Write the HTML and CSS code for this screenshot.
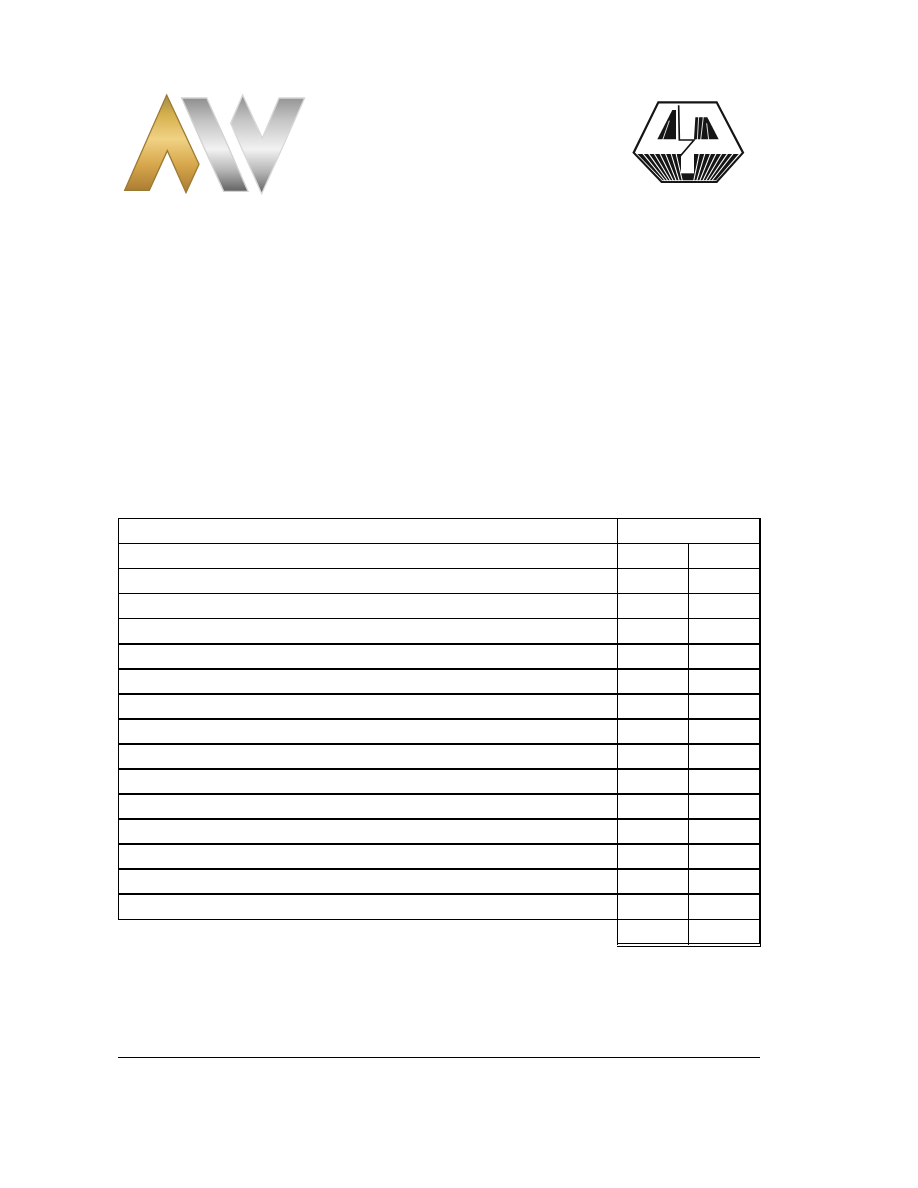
FILE: index.html
```html
<!DOCTYPE html>
<html lang="en">
<head>
  <meta charset="UTF-8">
  <meta name="viewport" content="width=device-width, initial-scale=1.0">
  <title>Datasheet page</title>
  <link rel="stylesheet" href="styles.css">
</head>
<body>
  <div class="page">
    <header class="logos">
      <!-- AW logo -->
      <svg class="logo-aw" viewBox="24 0 606 360" aria-label="AW logo">
        <defs>
          <linearGradient id="gold" x1="0" y1="0" x2="0" y2="1">
            <stop offset="0" stop-color="#a08a48"/>
            <stop offset="0.2" stop-color="#d6b04e"/>
            <stop offset="0.45" stop-color="#f0d284"/>
            <stop offset="0.7" stop-color="#d9a94e"/>
            <stop offset="1" stop-color="#a87a30"/>
          </linearGradient>
          <linearGradient id="steel" x1="0" y1="0" x2="0" y2="1">
            <stop offset="0" stop-color="#8f8f8f"/>
            <stop offset="0.25" stop-color="#c4c4c4"/>
            <stop offset="0.55" stop-color="#f2f2f2"/>
            <stop offset="0.78" stop-color="#b4b4b4"/>
            <stop offset="1" stop-color="#626262"/>
          </linearGradient>
          <filter id="soft"><feGaussianBlur stdDeviation="1.2"/></filter>
        </defs>
        <g filter="url(#soft)" stroke-width="4" stroke-linejoin="miter">
          <path d="M170 30 L267 238 L228 323 L172 197 L118 316 L44 316 Z" fill="url(#gold)" stroke="#9c7a34"/>
          <path d="M215 39 L290 39 L414 319 L341 319 Z" fill="url(#steel)" stroke="#d2d2d2"/>
          <path d="M398 30 L457 160 L507 39 L584 39 L455 326 L362 115 Z" fill="url(#steel)" stroke="#d8d8d8"/>
        </g>
      </svg>
      <!-- hexagon logo -->
      <svg class="logo-hex" viewBox="0 0 405 315" aria-label="Hexagon logo">
        <path class="hex" d="M115 37 L290 37 L369 188 L290 276 L125 276 L41 188 Z"/>
        <!-- fan under the 4 -->
        <path class="solid" d="M52 192 L356 192 L288 271 L128 271 Z"/>
        <g class="rays">
          <path d="M68 190 L136 273"/>
          <path d="M85 190 L144 273"/>
          <path d="M102 190 L152 273"/>
          <path d="M119 190 L160 273"/>
          <path d="M136 190 L169 273"/>
          <path d="M153 190 L178 273"/>
          <path d="M168 190 L187 273"/>
          <path d="M238 190 L221 273"/>
          <path d="M255 190 L230 273"/>
          <path d="M272 190 L239 273"/>
          <path d="M289 190 L248 273"/>
          <path d="M306 190 L257 273"/>
          <path d="M323 190 L266 273"/>
          <path d="M340 190 L275 273"/>
        </g>
        <rect class="stem" x="183" y="188" width="39" height="62"/>
        <!-- triangles of the letters -->
        <path class="solid" d="M157 60 L168 60 L168 148 L112 148 Z"/>
        <path class="solid" d="M226 82 L262 82 L296 148 L222 148 Z"/>
        <g class="rays thin">
          <path d="M148 92 L128 150"/>
          <path d="M236 80 L232 150"/>
          <path d="M250 80 L242 150"/>
          <path d="M260 100 L266 150"/>
        </g>
        <!-- outline of the 4 -->
        <path class="line" d="M176 46 L178 150 L222 150 L181 198"/>
      </svg>
    </header>

    <table class="sheet">
      <colgroup>
        <col class="col-name">
        <col class="col-val">
        <col class="col-val">
      </colgroup>
      <tr>
        <td class="name first"></td>
        <td class="val first end" colspan="2"></td>
      </tr>
      <tr><td class="name"></td><td class="val"></td><td class="val end"></td></tr>
      <tr><td class="name"></td><td class="val"></td><td class="val end"></td></tr>
      <tr><td class="name"></td><td class="val"></td><td class="val end"></td></tr>
      <tr class="tall thick"><td class="name"></td><td class="val"></td><td class="val end"></td></tr>
      <tr class="thick"><td class="name"></td><td class="val"></td><td class="val end"></td></tr>
      <tr class="thick"><td class="name"></td><td class="val"></td><td class="val end"></td></tr>
      <tr class="thick"><td class="name"></td><td class="val"></td><td class="val end"></td></tr>
      <tr class="thick"><td class="name"></td><td class="val"></td><td class="val end"></td></tr>
      <tr class="thick"><td class="name"></td><td class="val"></td><td class="val end"></td></tr>
      <tr class="thick"><td class="name"></td><td class="val"></td><td class="val end"></td></tr>
      <tr class="thick"><td class="name"></td><td class="val"></td><td class="val end"></td></tr>
      <tr class="thick"><td class="name"></td><td class="val"></td><td class="val end"></td></tr>
      <tr class="thick"><td class="name"></td><td class="val"></td><td class="val end"></td></tr>
      <tr class="thick"><td class="name"></td><td class="val"></td><td class="val end"></td></tr>
      <tr><td class="name"></td><td class="val"></td><td class="val end"></td></tr>
      <tr class="total">
        <td class="blank"></td>
        <td class="val"></td>
        <td class="val end"></td>
      </tr>
    </table>

    <hr class="rule">
  </div>
</body>
</html>
```

FILE: styles.css
```css
* {
  box-sizing: border-box;
}
body {
  margin: 0;
  background: #fff;
  font-family: "Liberation Serif", serif;
}
.page {
  width: 918px;
  height: 1188px;
  overflow: hidden;
  padding: 85px 157px 0 118px;
}
.logos {
  display: flex;
  justify-content: space-between;
  align-items: flex-start;
  padding-right: 6px;
  height: 120px;
}
.logo-aw {
  width: 202px;
  height: 120px;
}
.logo-hex {
  width: 135px;
  height: 105px;
  margin-top: 5px;
}
.hex {
  fill: #fff;
  stroke: #151515;
  stroke-width: 6.5;
  stroke-linejoin: miter;
}
.solid {
  fill: #151515;
}
.rays path {
  stroke: #fff;
  stroke-width: 3.2;
  fill: none;
}
.rays.thin path {
  stroke-width: 2.6;
}
.stem {
  fill: #fff;
}
.line {
  fill: none;
  stroke: #151515;
  stroke-width: 5;
}

.sheet {
  width: 643px;
  margin-top: 313px;
  border-collapse: separate;
  border-spacing: 0;
  table-layout: fixed;
}
.col-name {
  width: 499px;
}
.col-val:nth-child(2) {
  width: 71px;
}
.col-val:nth-child(3) {
  width: 73px;
}
.sheet td {
  height: 25px;
  padding: 0;
  border-bottom: 1px solid #000;
}
.sheet td.first {
  height: 26px;
  border-top: 1px solid #000;
}
.name {
  border-left: 1px solid #000;
}
.val {
  border-left: 1px solid #000;
}
.sheet td.end {
  border-right: 2px solid #000;
}
.thick td {
  border-bottom-width: 2px;
}
.sheet .tall td {
  height: 26px;
}
.sheet .total td {
  height: 27px;
  border-bottom: 4px double #000;
}
.sheet .total td.blank {
  border: 0;
}
.rule {
  width: 642px;
  height: 1px;
  margin: 110px 0 0;
  border: 0;
  background: #000;
}
```
